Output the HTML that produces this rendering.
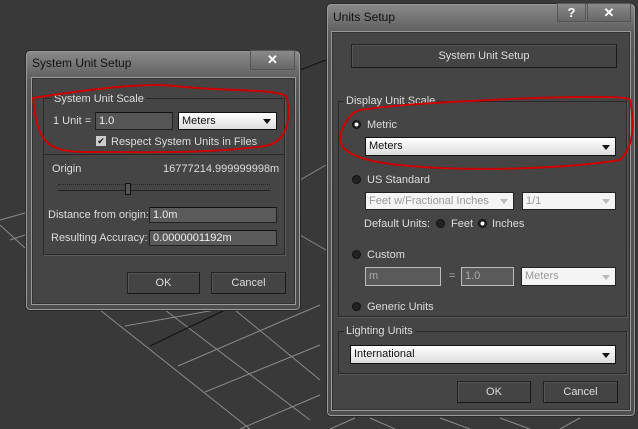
<!DOCTYPE html><html><head><style>
*{box-sizing:border-box;margin:0;padding:0}
body{width:638px;height:429px;background:#393939;position:relative;overflow:hidden;font-family:"Liberation Sans",sans-serif;font-size:11px;color:#ddd}
.a{position:absolute}
.dlg{position:absolute;border:1px solid #2a2a2a;border-radius:5px;background:linear-gradient(#8a8a8a,#5c5c5c 30px,#555 60px,#4e4e4e);box-shadow:inset 0 0 0 1px #999}
.cl{position:absolute;background:#454545;border:1px solid #9a9a9a;box-shadow:inset 0 0 0 1px #333}
.ttl{position:absolute;color:#111;font-size:12px}
.grp{position:absolute;border:1px solid #2a2a2a;box-shadow:1px 1px 0 #5a5a5a}
.lg{position:absolute;background:#454545;padding:0 2px;color:#ddd;font-size:11px}
.btn{position:absolute;background:#444;border:1px solid #222;border-right-color:#1a1a1a;border-bottom-color:#1a1a1a;box-shadow:inset 1px 1px 0 #555;text-align:center;color:#ddd;font-size:11px}
.inp{position:absolute;background:#5a5a5a;border:1px solid #222;border-top-color:#111;color:#eee;font-size:11px;padding-left:3px}
.dd{position:absolute;background:linear-gradient(#fff,#ddd);border:1px solid #111;color:#111;font-size:11px;padding-left:3px}
.dd:after{content:"";position:absolute;right:5px;top:50%;margin-top:-2px;border:4px solid transparent;border-top:5px solid #111;border-bottom:0}
.ddd{position:absolute;background:#f4f4f4;border:1px solid #222;color:#999;font-size:11px;padding-left:3px}
.ddd:after{content:"";position:absolute;right:5px;top:50%;margin-top:-2px;border:4px solid transparent;border-top:5px solid #bbb;border-bottom:0}
.rad{position:absolute;width:9px;height:9px;border-radius:50%;background:#222;border:1px solid #111}
.rad.on{background:radial-gradient(#fff 35%,#222 45%)}
.tb{position:absolute;border:1px solid #555;background:linear-gradient(#8a8a8a,#666);color:#fff;text-align:center;font-weight:bold;font-size:13px}
</style></head><body>
<svg class="a" style="left:0;top:0" width="638" height="429">
<g stroke="#8a8a8a" stroke-width="1" fill="none">
<line x1="100" y1="310" x2="250" y2="429"/><line x1="165" y1="310" x2="310" y2="420"/><line x1="235" y1="310" x2="320" y2="380"/>
<line x1="125" y1="326" x2="215" y2="310"/><line x1="178" y1="366" x2="320" y2="305"/><line x1="205" y1="392" x2="320" y2="345"/><line x1="240" y1="429" x2="320" y2="395"/>
<line x1="0" y1="220" x2="25" y2="213"/><line x1="0" y1="225" x2="25" y2="248"/><line x1="10" y1="240" x2="25" y2="235"/>
<line x1="300" y1="180" x2="326" y2="165"/><line x1="300" y1="235" x2="326" y2="250"/>
<line x1="330" y1="429" x2="355" y2="418"/><line x1="370" y1="418" x2="395" y2="429"/><line x1="440" y1="418" x2="470" y2="429"/><line x1="500" y1="418" x2="530" y2="429"/><line x1="580" y1="418" x2="560" y2="429"/>
</g>
<line x1="150" y1="346" x2="225" y2="310" stroke="#111"/><line x1="300" y1="70" x2="326" y2="60" stroke="#111"/>
</svg>

<!-- Left dialog -->
<div class="dlg" style="left:25px;top:50px;width:276px;height:261px"></div>
<div class="ttl" style="left:32px;top:56px">System Unit Setup</div>
<div class="tb" style="left:250px;top:50px;width:45px;height:20px;line-height:18px">✕</div>
<div class="cl" style="left:31px;top:77px;width:265px;height:228px"></div>
<div class="grp" style="left:43px;top:98px;width:242px;height:157px"></div>
<div class="a" style="left:43px;top:154px;width:242px;height:1px;background:#2a2a2a"></div>
<div class="lg" style="left:52px;top:93px">System Unit Scale</div>
<div class="a" style="left:53px;top:115px">1 Unit =</div>
<div class="inp" style="left:95px;top:112px;width:78px;height:18px;line-height:16px;background:#555">1.0</div>
<div class="dd" style="left:178px;top:112px;width:99px;height:18px;line-height:16px">Meters</div>
<div class="a" style="left:96px;top:136px;width:10px;height:10px;background:#ccc;color:#111;font-size:9px;line-height:10px;text-align:center">✔</div>
<div class="a" style="left:111px;top:136px">Respect System Units in Files</div>
<div class="a" style="left:52px;top:163px">Origin</div>
<div class="a" style="left:163px;top:163px">16777214.999999998m</div>
<div class="a" style="left:58px;top:184px;width:212px;height:0;border-top:1px dotted #222"></div>
<div class="a" style="left:58px;top:190px;width:212px;height:1px;background:#222"></div>
<div class="a" style="left:125px;top:183px;width:6px;height:12px;background:#555;border:1px solid #111"></div>
<div class="a" style="left:48px;top:209px">Distance from origin:</div>
<div class="inp" style="left:149px;top:207px;width:128px;height:16px;line-height:14px">1.0m</div>
<div class="a" style="left:51px;top:232px">Resulting Accuracy:</div>
<div class="inp" style="left:149px;top:230px;width:128px;height:16px;line-height:14px">0.0000001192m</div>
<div class="btn" style="left:127px;top:272px;width:73px;height:22px;line-height:20px">OK</div>
<div class="btn" style="left:211px;top:272px;width:75px;height:22px;line-height:20px">Cancel</div>
<svg class="a" style="left:25px;top:80px" width="275" height="80"><path d="M8 18 C60 10 120 2 150 6 C200 12 260 8 262 18 C266 40 262 62 240 66 C180 74 120 72 60 72 C20 72 12 60 8 18Z" fill="none" stroke="#c00" stroke-width="2"/></svg>

<!-- Right dialog -->
<div class="dlg" style="left:326px;top:3px;width:310px;height:414px"></div>
<div class="ttl" style="left:333px;top:10px">Units Setup</div>
<div class="tb" style="left:557px;top:3px;width:29px;height:19px;line-height:17px">?</div>
<div class="tb" style="left:587px;top:3px;width:44px;height:19px;line-height:17px">✕</div>
<div class="cl" style="left:331px;top:31px;width:300px;height:380px"></div>
<div class="btn" style="left:351px;top:44px;width:266px;height:24px;line-height:22px">System Unit Setup</div>
<div class="grp" style="left:338px;top:101px;width:289px;height:216px"></div>
<div class="lg" style="left:344px;top:95px">Display Unit Scale</div>
<div class="rad on" style="left:352px;top:120px"></div>
<div class="a" style="left:367px;top:119px">Metric</div>
<div class="dd" style="left:365px;top:137px;width:251px;height:19px;line-height:17px">Meters</div>
<div class="rad" style="left:352px;top:175px"></div>
<div class="a" style="left:367px;top:174px">US Standard</div>
<div class="ddd" style="left:365px;top:192px;width:149px;height:18px;line-height:16px">Feet w/Fractional Inches</div>
<div class="ddd" style="left:522px;top:192px;width:94px;height:18px;line-height:16px">1/1</div>
<div class="a" style="left:364px;top:218px">Default Units:</div>
<div class="rad" style="left:436px;top:219px"></div>
<div class="a" style="left:451px;top:218px">Feet</div>
<div class="rad on" style="left:478px;top:219px"></div>
<div class="a" style="left:492px;top:218px">Inches</div>
<div class="rad" style="left:352px;top:250px"></div>
<div class="a" style="left:367px;top:249px">Custom</div>
<div class="inp" style="left:365px;top:267px;width:76px;height:19px;line-height:17px;border:1px solid #bbb;color:#aaa">m</div>
<div class="a" style="left:449px;top:270px;color:#aaa">=</div>
<div class="inp" style="left:461px;top:267px;width:53px;height:19px;line-height:17px;border:1px solid #bbb;color:#aaa">1.0</div>
<div class="ddd" style="left:521px;top:267px;width:95px;height:19px;line-height:17px">Meters</div>
<div class="rad" style="left:352px;top:302px"></div>
<div class="a" style="left:367px;top:301px">Generic Units</div>
<div class="grp" style="left:338px;top:331px;width:289px;height:43px"></div>
<div class="lg" style="left:344px;top:325px">Lighting Units</div>
<div class="dd" style="left:350px;top:345px;width:266px;height:19px;line-height:17px">International</div>
<div class="btn" style="left:457px;top:381px;width:74px;height:22px;line-height:20px">OK</div>
<div class="btn" style="left:543px;top:381px;width:75px;height:22px;line-height:20px">Cancel</div>
<svg class="a" style="left:330px;top:90px" width="308" height="90"><path d="M30 20 C70 14 120 12 160 10 C200 8 300 4 300 10 C304 30 305 55 290 70 C240 78 150 82 80 76 C30 72 2 62 12 40 C16 30 22 22 30 20Z" fill="none" stroke="#c00" stroke-width="2"/></svg>
</body></html>
